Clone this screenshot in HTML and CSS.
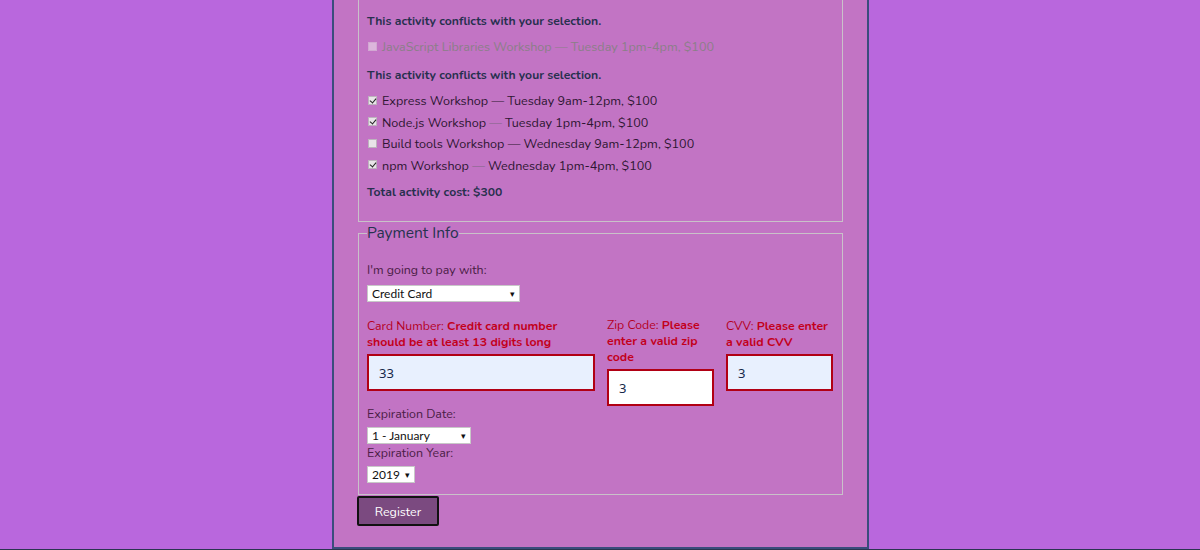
FILE: index.html
```html
<!DOCTYPE html>
<html>
<head>
<meta charset="utf-8">
<link rel="stylesheet" href="styles.css">
</head>
<body>
<div class="page">
  <form class="container">
    <fieldset class="activities">
      <p class="conflict">This activity conflicts with your selection.</p>
      <label class="act disabled"><span class="cb"></span><span>JavaScript Libraries Workshop — Tuesday 1pm-4pm, $100</span></label>
      <p class="conflict">This activity conflicts with your selection.</p>
      <label class="act"><span class="cb checked"></span><span>Express Workshop — Tuesday 9am-12pm, $100</span></label>
      <label class="act"><span class="cb checked"></span><span>Node.js Workshop <span class="dash">—</span> Tuesday 1pm-4pm, $100</span></label>
      <label class="act"><span class="cb"></span><span>Build tools Workshop — Wednesday 9am-12pm, $100</span></label>
      <label class="act"><span class="cb checked"></span><span>npm Workshop <span class="dash">—</span> Wednesday 1pm-4pm, $100</span></label>
      <p class="total">Total activity cost: $300</p>
    </fieldset>
    <fieldset class="payment">
      <legend>Payment Info</legend>
      <label class="lbl pay-lbl">I'm going to pay with:</label>
      <div class="sel sel-pay"><span>Credit Card</span><span class="arrow">▾</span></div>
      <div class="cc-grid">
        <div class="col">
          <label class="err-lbl">Card Number: <b>Credit card number should be at least 13 digits long</b></label>
          <div class="inp auto">33</div>
        </div>
        <div class="col">
          <label class="err-lbl">Zip Code: <b>Please enter a valid zip code</b></label>
          <div class="inp">3</div>
        </div>
        <div class="col">
          <label class="err-lbl">CVV: <b>Please enter a valid CVV</b></label>
          <div class="inp auto">3</div>
        </div>
      </div>
      <label class="lbl exp-lbl">Expiration Date:</label>
      <div class="sel sel-month"><span>1 - January</span><span class="arrow">▾</span></div>
      <label class="lbl year-lbl">Expiration Year:</label>
      <div class="sel sel-year"><span>2019</span><span class="arrow">▾</span></div>
    </fieldset>
    <button type="button" class="register">Register</button>
  </form>
</div>
</body>
</html>
```
FILE: styles.css
```css
* { box-sizing: border-box; }
html, body { margin: 0; padding: 0; }
body {
  background: #b967dd;
  font-family: "Nunito", "Lato", "Noto Sans", sans-serif;
  height: 550px;
  overflow: hidden;
}
.page {
  display: flow-root;
  height: 550px;
  border-bottom: 1px solid #2a3550;
}
.container {
  width: 537px;
  margin: -40px 0 0 332px;
  background: #c274c4;
  border: 2px solid #3a4d7c;
  border-top: none;
  padding: 0 24px 21px 24px;
  height: 589px;
}
fieldset {
  border: 1px solid #c9c1c9;
  margin: 0;
  padding: 0 8px;
}
.activities {
  padding-top: 40px;
  height: 262px;
  display: flex;
  flex-direction: column;
}
.conflict {
  margin: 12px 0 0;
  font-size: 12.2px;
  font-weight: 700;
  color: #27304e;
  line-height: 16px;
}
.conflict + .act { margin-top: 10px; }
.act {
  display: flex;
  align-items: center;
  font-size: 12.6px;
  color: #2e1632;
  line-height: 16px;
  margin-top: 5.5px;
}
.act.disabled { color: #8b7f88; }
.dash { color: #7f6684; }
.cb {
  width: 9px;
  height: 9px;
  background: #e8e4e8;
  border: 1px solid #bdb3bd;
  margin: 0 5px 2px 1px;
  position: relative;
  flex: none;
}
.act.disabled .cb { background: #dcb5dc; border-color: #d2a8d2; }
.cb.checked::after {
  content: "";
  position: absolute;
  left: 2px;
  top: 0px;
  width: 3px;
  height: 5px;
  border: solid #222;
  border-width: 0 1.5px 1.5px 0;
  transform: rotate(40deg);
}
.total {
  margin: 10px 0 0;
  font-size: 12.2px;
  font-weight: 700;
  color: #27304e;
}
.payment {
  margin-top: 2px;
  height: 271px;
  padding-top: 0;
  padding-bottom: 0;
}
legend {
  font-size: 15.5px;
  color: #26334f;
  padding: 0;
  line-height: 18px;
}
.lbl {
  display: block;
  font-size: 12.4px;
  color: #4a1d44;
  line-height: 16px;
}
.pay-lbl { margin-top: 20px; }
.sel {
  display: flex;
  justify-content: space-between;
  align-items: center;
  background: #fff;
  border: 1px solid #c8c8c8;
  font-size: 12px;
  color: #111;
  height: 17px;
  padding: 0 4px 0 4px;
  font-family: "Lato", "Noto Sans", sans-serif;
}
.sel .arrow { font-size: 9px; }
.sel-pay { width: 153px; margin-top: 7px; }
.sel-month { width: 104px; margin-top: 5px; }
.sel-year { width: 48px; margin-top: 5px; }
.cc-grid {
  display: grid;
  grid-template-columns: 228px 107px 107px;
  column-gap: 12px;
  margin-top: 15px;
  align-items: end;
}
.col { display: flex; flex-direction: column; }
.err-lbl {
  font-size: 12.3px;
  color: #b5001e;
  line-height: 16px;
  margin-bottom: 4px;
}
.err-lbl b { font-weight: 700; color: #c2001b; }
.inp {
  height: 37px;
  border: 2px solid #b10014;
  background: #fff;
  font-family: "Noto Sans", sans-serif;
  font-size: 13px;
  color: #16284a;
  padding: 0 10px;
  display: flex;
  align-items: center;
}
.inp.auto { background: #e8f0fe; }
.col:nth-child(1) .inp, .col:nth-child(3) .inp { margin-bottom: 15px; }
.exp-lbl { margin-top: 0; }
.year-lbl { margin-top: 1px; }
.register {
  margin: 1px 0 0 -1px;
  width: 82px;
  height: 30px;
  background: #7b4a80;
  border: 2px solid #111;
  border-radius: 2px;
  color: #fff;
  font-family: "Nunito", "Lato", sans-serif;
  font-size: 12.5px;
}
```
